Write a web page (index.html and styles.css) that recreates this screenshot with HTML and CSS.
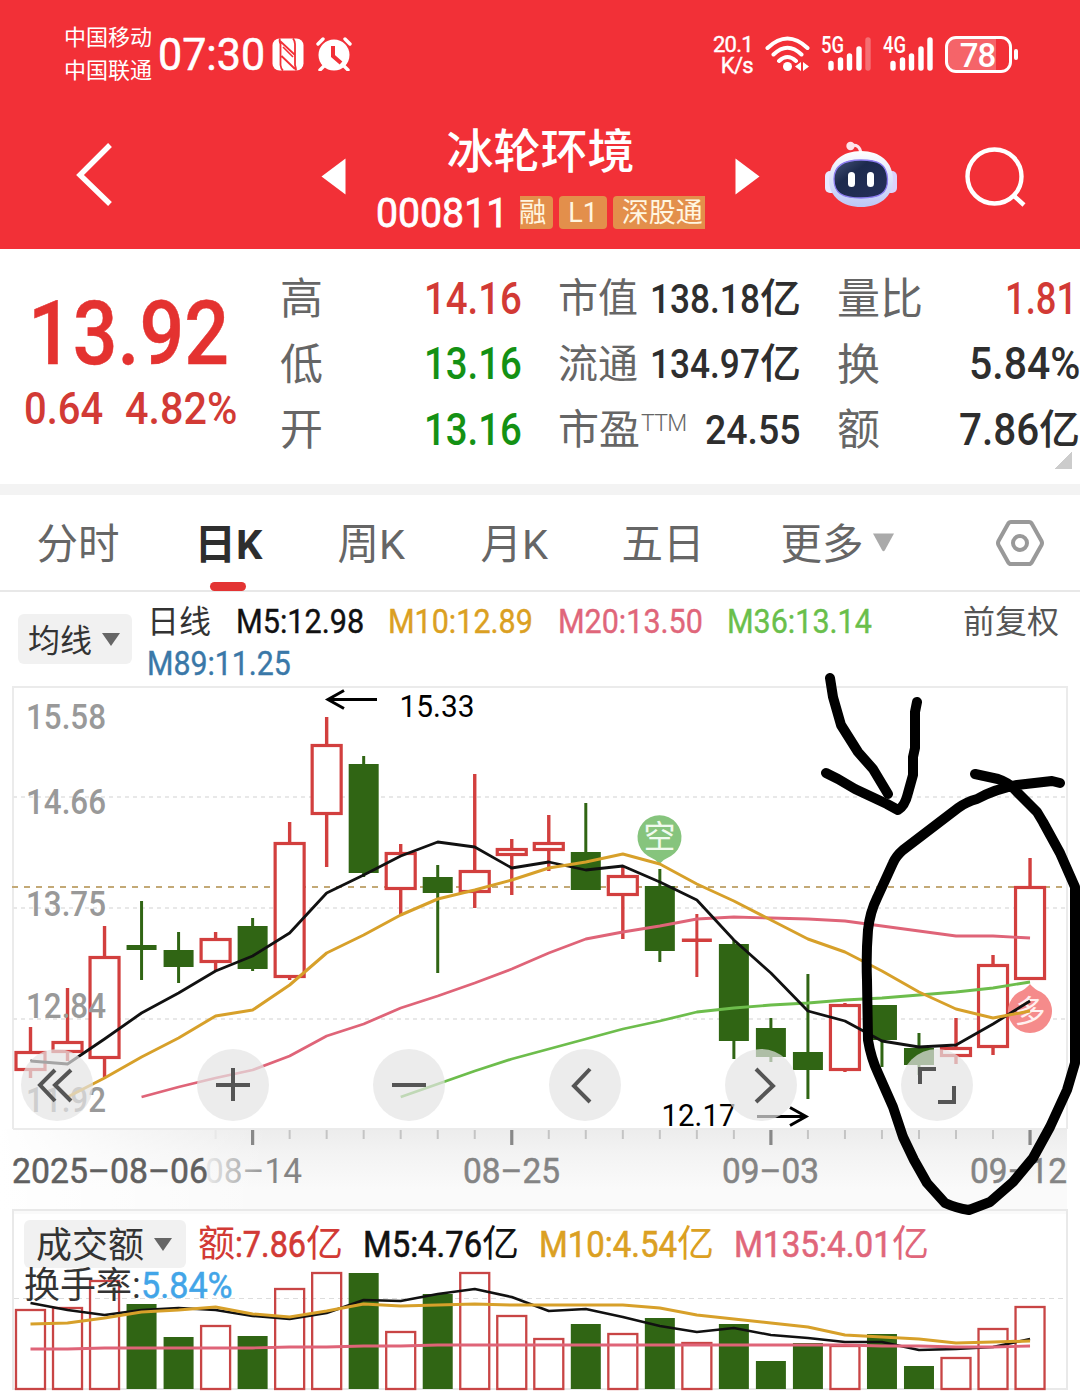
FILE: index.html
```html
<!DOCTYPE html>
<html lang="zh-CN">
<head>
<meta charset="utf-8">
<title>冰轮环境 000811</title>
<link rel="stylesheet" href="styles.css">
</head>
<body>
<div class="screen">
<header class="top">
  <div class="status">
    <div class="carriers"><span>中国移动</span><span>中国联通</span></div>
    <div class="clock" data-w="107">07:30</div>
    <svg class="nfc" width="32" height="33" viewBox="0 0 32 33"><rect x="0.5" y="0.5" width="31" height="32" rx="7" fill="#fff"/><path d="M8 0.500Q7 3 8.500 6V27Q9 31 11 32.500M21 0.500Q23 3 23 6V27Q24 30 24 32.500M8 3L23 17M9.500 18L23 31" fill="none" stroke="#f23037" stroke-width="1.800"/><path d="M11 9L21 19" fill="none" stroke="#f23037" stroke-width="1.600"/></svg>
    <svg class="alarm" width="36" height="34" viewBox="0 0 36 34"><circle cx="18" cy="18" r="15.5" fill="#fff"/><path d="M8 29L4 33M28 29L32 33M2 7L7 2M34 7L29 2" stroke="#fff" stroke-width="3.4" stroke-linecap="round"/><path d="M17 9V19L25 26" fill="none" stroke="#f23037" stroke-width="4"/></svg>
    <div class="speed"><span>20.1</span><span>K/s</span></div>
    <svg class="wifi" width="46" height="36" viewBox="0 0 46 36"><path d="M2.500 12Q22.500-7 42.500 12M8.500 18.500Q22.500 5 36.500 18.500M14 25Q22.500 17 31 25" fill="none" stroke="#fff" stroke-width="4" stroke-linecap="round"/><circle cx="22.500" cy="30.500" r="4.500" fill="#fff"/><path d="M36 26v9l-6-4.500zM38 26v9l6-4.500z" fill="#fff"/></svg>
    <div class="signal"><span>5G</span><svg width="44" height="36" viewBox="0 0 44 36" stroke="#fff" stroke-width="5.400" stroke-linecap="round"><path d="M3 27.500V32M12.500 24V32M21.500 20V32M31 13V32"/><path d="M40 4V32" opacity=".3"/></svg></div>
    <div class="signal second"><span>4G</span><svg width="44" height="36" viewBox="0 0 44 36" stroke="#fff" stroke-width="5.400" stroke-linecap="round"><path d="M3 27.500V32M12.500 24V32M21.500 20V32M31 13V32M40 4V32"/></svg></div>
    <div class="battery"><span>78</span></div>
  </div>
  <nav class="nav">
    <svg class="back" width="40" height="70" viewBox="0 0 40 70"><path d="M35 6L5 36L35 65" fill="none" stroke="#fff" stroke-width="5.400"/></svg>
    <svg class="prev" width="25" height="37" viewBox="0 0 25 37"><path d="M0.500 18.500L24.500 0.500V36.500z" fill="#fff"/></svg>
    <div class="stock">
      <h1>冰轮环境</h1>
      <div class="code"><b data-w="132">000811</b><i class="clip-l">融</i><i>L1</i><i class="clip-r">深股通</i></div>
    </div>
    <svg class="next" width="25" height="37" viewBox="0 0 25 37"><path d="M24.500 18.500L0.500 0.500V36.500z" fill="#fff"/></svg>
    <svg class="robot" width="74" height="68" viewBox="0 0 74 68">
      <defs><linearGradient id="shell" x2="0" y2="1"><stop offset="0" stop-color="#fff"/><stop offset="1" stop-color="#bcc7f6"/></linearGradient><linearGradient id="visor" x2="1" y2="1"><stop offset="0" stop-color="#465579"/><stop offset=".35" stop-color="#1d2a4d"/><stop offset="1" stop-color="#26305a"/></linearGradient></defs>
      <path d="M26 5Q36 2 37 13" fill="none" stroke="#fde5ef" stroke-width="3"/><circle cx="26.500" cy="5" r="4.200" fill="#ffe3ea"/>
      <rect x="1" y="30" width="12" height="22" rx="5" fill="#e9e9ff"/><rect x="61" y="30" width="12" height="22" rx="5" fill="#dcd2fb"/>
      <path d="M37 10C56 10 69 21 69 39C69 56 55 66 37 66C19 66 5 56 5 39C5 21 18 10 37 10z" fill="url(#shell)"/>
      <path d="M37 19C54 19 63 23 63.500 38C64 52 56 57 37 57C18 57 10 52 10 38C10 24 20 19 37 19z" fill="url(#visor)" stroke="#8c7cf0" stroke-width="1.300"/>
      <rect x="24" y="31" width="7" height="15" rx="3.500" fill="#fff"/><rect x="43" y="31" width="7" height="15" rx="3.500" fill="#fff"/>
    </svg>
    <svg class="search" width="64" height="64" viewBox="0 0 64 64" fill="none" stroke="#fff" stroke-width="4.400"><circle cx="30.500" cy="30.500" r="27"/><path d="M49 49L60 59"/></svg>
  </nav>
</header>

<section class="quote">
  <div class="last">
    <div class="price"><b data-w="201">13.92</b></div>
    <div class="change"><b data-w="79">0.64</b><b data-w="112">4.82%</b></div>
  </div>
  <div class="stats first">
    <div><span>高</span><b class="up" data-w="98">14.16</b></div>
    <div><span>低</span><b class="down" data-w="98">13.16</b></div>
    <div><span>开</span><b class="down" data-w="98">13.16</b></div>
  </div>
  <div class="stats mid">
    <div><span>市值</span><p><b data-w="110">138.18</b>亿</p></div>
    <div><span>流通</span><p><b data-w="110">134.97</b>亿</p></div>
    <div><span class="pe">市盈<sup>TTM</sup></span><b data-w="96">24.55</b></div>
  </div>
  <div class="stats wide">
    <div><span>量比</span><b class="up" data-w="72">1.81</b></div>
    <div><span>换</span><b data-w="111">5.84%</b></div>
    <div><span>额</span><p><b data-w="80">7.86</b>亿</p></div>
  </div>
  <i class="corner"></i>
</section>

<nav class="tabs">
  <span>分时</span><span class="on">日K</span><span>周K</span><span>月K</span><span>五日</span>
  <span class="more">更多<svg width="23" height="19" viewBox="0 0 23 19"><path d="M1 0.500H22L13 17Q11.500 19.500 10 17z" fill="#aaa"/></svg></span>
  <svg class="gear" width="50" height="48" viewBox="0 0 50 48" fill="none" stroke="#999" stroke-width="4"><path d="M16 3H34Q36 3 37 5L46.500 22Q47.500 24 46.500 26L37 43Q36 45 34 45H16Q14 45 13 43L3.500 26Q2.500 24 3.500 22L13 5Q14 3 16 3z"/><circle cx="25" cy="24" r="7"/></svg>
</nav>

<section class="legend">
  <div class="chip"><span>均线</span><svg width="18" height="13" viewBox="0 0 18 13"><path d="M0 0H18L9 13z" fill="#666"/></svg></div>
  <div class="ma">
    <span class="day">日线</span><b class="m5" data-w="128">M5:12.98</b><b class="m10" data-w="145">M10:12.89</b><b class="m20" data-w="145">M20:13.50</b><b class="m36" data-w="145">M36:13.14</b>
    <b class="m89" data-w="144">M89:11.25</b>
  </div>
  <span class="adjust">前复权</span>
</section>

<section class="chart">
  <svg id="kline" width="1080" height="523" viewBox="0 686 1080 523"></svg>
  <div class="tools">
    <button><svg viewBox="0 0 72 72"><path d="M34 21L19 36L34 52M50 21L34 36L50 52"/></svg></button>
    <button><svg viewBox="0 0 72 72"><path d="M36 19V52M19 36H53"/></svg></button>
    <button><svg viewBox="0 0 72 72"><path d="M19 36H53"/></svg></button>
    <button><svg viewBox="0 0 72 72"><path d="M41 20L25 37L41 53"/></svg></button>
    <button><svg viewBox="0 0 72 72"><path d="M31 20L48 37L31 53"/></svg></button>
    <button><svg viewBox="0 0 72 72"><path d="M19 35V20H35M53 37V53H37"/></svg></button>
  </div>
</section>

<section class="volume">
  <svg id="vol" width="1080" height="189" viewBox="0 1209 1080 189"></svg>
  <div class="vol-head">
    <div class="chip"><span>成交额</span><svg width="18" height="13" viewBox="0 0 18 13"><path d="M0 0H18L9 13z" fill="#666"/></svg></div>
    <p class="up">额<b data-w="71">:7.86</b>亿</p><p class="m5"><b data-w="119">M5:4.76</b>亿</p><p class="m10"><b data-w="138">M10:4.54</b>亿</p><p class="m20"><b data-w="158">M135:4.01</b>亿</p>
  </div>
  <div class="turnover">换手率:<b data-w="92">5.84%</b></div>
</section>

<svg class="ink" width="1080" height="1398" viewBox="0 0 1080 1398">
  <path d="M830 678L833 697L841 725L858 752L873 769L888 794"/>
  <path d="M826 773L838 779L855 789L887 804L898 810Q905 806 908 793L913 775L913 757L915 748V712L917 702"/>
  <path d="M1060 783L1052 781L1017 785Q995 789 977 799Q966 802 958 808L903 850Q896 856 893 863L877 898Q870 912 868 930Q866 955 867 980L868 1040Q871 1058 878 1073L893 1107L903 1137L914 1160L927 1183L945 1203Q956 1208 969 1210L990 1202L1013 1182L1033 1158L1050 1127L1067 1090L1075 1063V887L1060 853L1043 822L1037 812L1017 792Q1010 783 998 779L975 774"/>
</svg>
</div>
<script src="app.js"></script>
</body>
</html>
```
FILE: styles.css
```css
* { box-sizing: border-box; margin: 0; padding: 0; }
body { background: #fff; font-family: Roboto, "Noto Sans CJK SC", sans-serif; color: #333; }
svg { display: block; flex: none; }
i { font-style: normal; }
b { font-weight: 500; }
.screen { position: relative; width: 1080px; height: 1398px; overflow: hidden; }
[data-w] { display: inline-block; white-space: nowrap; }
[data-w] > span { display: inline-block; transform-origin: 0 50%; }

.top { height: 249px; background: #f23037; color: #fff; }
.status { height: 108px; display: flex; align-items: center; padding-left: 64px; }
.carriers { display: flex; flex-direction: column; font-size: 22px; line-height: 33px; width: 94px; margin-top: -1px; }
.clock { font-size: 45px; line-height: 50px; margin-top: 2px; -webkit-text-stroke: .6px currentColor; }
.nfc { margin-left: 7px; }
.alarm { margin-left: 12px; }
.speed { margin-left: 351px; width: 62px; padding: 2px 12px 0 0; display: flex; flex-direction: column; align-items: flex-end; font-size: 22px; line-height: 21px; letter-spacing: -.7px; -webkit-text-stroke: .4px currentColor; }
.signal { position: relative; width: 62px; height: 36px; padding-left: 7px; }
.wifi + .signal { margin-left: 10px; }
.signal span { position: absolute; left: 0; top: 0; font-size: 23px; line-height: 20px; font-weight: 500; transform: scaleX(.8); transform-origin: 0 0; }
.battery { position: relative; width: 67px; height: 37px; border: 3px solid #fff; border-radius: 11px; background: linear-gradient(90deg, rgba(255,255,255,.25) 78%, transparent 78%); text-align: center; font-size: 33px; font-weight: 500; line-height: 33px; letter-spacing: -1px; padding-right: 2px; }
.battery::after { content: ""; position: absolute; right: -9px; top: 10px; width: 4px; height: 11px; border-radius: 2px; background: #fff; }

.nav { display: flex; align-items: flex-start; height: 141px; padding-left: 75px; }
.back { margin-top: 31px; }
.prev { margin: 50px 0 0 206px; }
.stock { width: 389px; height: 141px; display: flex; flex-direction: column; align-items: center; }
.stock h1 { font-size: 47px; line-height: 54px; font-weight: 500; margin-top: 17px; }
.code { display: flex; align-items: center; height: 34px; margin-top: 16px; gap: 6px; font-size: 41px; line-height: 44px; }
.code b { font-weight: 400; margin-right: 6px; padding-top: 2px; -webkit-text-stroke: .8px currentColor; }
.code i { background: #e38f4b; color: #fff6e0; font-size: 27px; line-height: 35px; height: 33px; padding: 0 9px; border-radius: 4px; }
.code .clip-l { width: 33px; padding: 0 7px 0 0; direction: rtl; overflow: hidden; border-radius: 0 4px 4px 0; }
.code .clip-r { padding-right: 2px; border-radius: 4px 0 0 4px; }
.next { margin-top: 50px; }
.robot { margin: 33px 0 0 64px; }
.search { margin: 38px 0 0 66px; }

.quote { position: relative; height: 235px; display: grid; grid-template-columns: 280px 278px 279px 243px; padding-top: 17px; }
.last { padding-left: 24px; color: #e43230; }
.price { height: 112px; font-size: 89px; line-height: 136px; margin-left: 4px; -webkit-text-stroke: .5px currentColor; }
.change { display: flex; gap: 22px; font-size: 45px; line-height: 62px; color: #d23a35; }
.stats > div { height: 65.5px; display: flex; justify-content: space-between; align-items: center; width: 243px; font-size: 45px; line-height: 66px; }
.first > div { width: 242px; }
.stats > div > span { color: #666; font-size: 43px; padding-top: 1px; }
.stats b { color: #2e2e2e; }
.stats b span { font-size: inherit; }
.stats p { display: flex; font-size: 41px; color: #2e2e2e; font-weight: 500; }
.stats .up, .up, .up b { color: #d23a35; }
.stats .down { color: #149114; }
.stats.mid > div > span { font-size: 40px; }
.mid b { font-size: 41px; }
.wide p b { font-size: 45px; }
.wide .up { margin-right: 3px; }
.stats.mid > div > .pe { font-size: 41px; }
.pe sup { font-size: 23px; font-weight: 300; line-height: 20px; vertical-align: 13px; letter-spacing: -.7px; margin-left: 1px; }
.corner { position: absolute; right: 8px; bottom: 15px; width: 18px; height: 18px; background: linear-gradient(135deg, transparent 50%, #ccc 50%); }

.tabs { height: 108px; border-top: 11px solid #f3f3f3; border-bottom: 2px solid #e8e8e8; display: grid; grid-template-columns: 158px 143px 143px 141px 159px 214px 1fr; padding-left: 36.5px; align-items: center; font-size: 41.5px; color: #666; line-height: 99px; }
.tabs span { position: relative; height: 95px; white-space: nowrap; }
.tabs .on { font-weight: 700; color: #2e2e2e; }
.on::after { content: ""; position: absolute; left: 15px; bottom: -1px; width: 36px; height: 9px; border-radius: 5px; background: #e33433; }
.more { display: flex; align-items: flex-start; gap: 8px; }
.more svg { margin-top: 38px; }

.legend { height: 94px; display: flex; padding: 8px 18px 0; font-size: 32px; }
.chip { width: 114px; height: 50px; margin-top: 14px; padding-left: 10px; background: #f1f1f1; border-radius: 6px; display: flex; align-items: center; gap: 10px; font-size: 32px; line-height: 50px; color: #333; }
.chip span { padding-top: 3px; }
.ma { flex: none; margin-left: 15px; width: 816px; line-height: 42px; display: flex; flex-wrap: wrap; column-gap: 24.5px; align-content: flex-start; }
.day { padding-top: 1px; height: 42px; }
.ma b { font-size: 33px; height: 42px; padding-top: 1px; font-weight: 400; -webkit-text-stroke: .4px currentColor; }
.adjust { line-height: 44px; color: #555; white-space: nowrap; }
.m5, .m5 b { color: #111; }
.m10, .m10 b { color: #dba022; }
.m20, .m20 b { color: #e0667a; }
.m36 { color: #6abf4b; }
.m89 { color: #3a78a8; }

.chart { position: relative; height: 523px; }
.tools { position: absolute; left: 21px; top: 363px; display: flex; gap: 104px; }
.tools button { width: 72px; height: 72px; border: 0; border-radius: 50%; background: rgba(228,228,228,.7); }
.tools path { fill: none; stroke: #555; stroke-width: 4; }

.volume { position: relative; height: 189px; }
.volume > svg { position: absolute; left: 0; top: 0; }
.vol-head { position: relative; display: flex; height: 59px; padding: 11px 0 0 24px; font-size: 37px; line-height: 50px; }
.vol-head .chip { width: 162px; height: 48px; margin: 0 12px 0 0; padding-left: 12px; font-size: 36px; line-height: 48px; }
.vol-head p { display: flex; margin-right: 20px; }
.vol-head b { font-weight: 400; -webkit-text-stroke: .6px currentColor; }
.turnover { position: relative; display: flex; padding-left: 24px; margin-top: -7px; font-size: 36px; line-height: 50px; }
.turnover b { color: #42a5e8; font-weight: 400; -webkit-text-stroke: .5px currentColor; }
.ink { position: absolute; left: 0; top: 0; pointer-events: none; }
.ink path { fill: none; stroke: #000; stroke-width: 10; stroke-linecap: round; stroke-linejoin: round; }
```
FILE: app.js
```javascript
document.querySelectorAll('[data-w]').forEach(el => {
  const inner = document.createElement('span');
  inner.textContent = el.textContent;
  el.textContent = '';
  el.appendChild(inner);
  const w = +el.dataset.w;
  inner.style.transform = `scaleX(${w / inner.offsetWidth})`;
  el.style.width = w + 'px';
});

const X = i => 30.5 + 37.02 * i;
const RED = '#d23f3e', GREEN = '#306514';

// [up?, high, body top, body bottom, low, volume top]
const days = [
  [1,1027,1051,1071,1078,1309],[1,988,1041,1053,1061,1307],[1,926,956,1059,1077,1280],
  [0,901,945,950,980,1304],[0,932,950,967,983,1337],[1,932,938,963,971,1325],
  [0,918,926,969,971,1336],[1,822,842,978,980,1288],[1,717,744,815,867,1272],
  [0,756,764,873,877,1273],[1,844,852,890,916,1331],[0,865,877,893,973,1294],
  [1,774,870,893,908,1272],[1,839,848,856,895,1315],[1,815,842,851,871,1338],
  [0,803,852,890,890,1324],[1,867,875,896,939,1333],[0,869,886,951,962,1318],
  [1,914,938.5,942,977,1342],[0,940,944,1041,1059,1324],[0,1018,1028,1057,1062,1361],
  [0,974,1052,1070,1099,1343],[1,1003,1004,1071,1072,1345],[0,1005,1005,1040,1067,1334],
  [0,1033,1048,1065,1075,1366],[1,1018,1047,1057,1064,1357],[1,955,964,1048,1055,1328],
  [1,858,886,980,980,1306]
];
const line = (start, ys, color, w = 2.8) =>
  `<polyline fill="none" stroke="${color}" stroke-width="${w}" stroke-linejoin="round" points="${ys.map((y, k) => X(start + k) + ',' + y).join(' ')}"/>`;
const text = (x, y, w, size, color, s, extra = '') =>
  `<text x="${x}" y="${y}" font-size="${size}" fill="${color}" textLength="${w}" lengthAdjust="spacingAndGlyphs" ${extra}>${s}</text>`;

let k = `<defs>
<linearGradient id="band" x2="0" y2="1"><stop offset="0" stop-color="#ececec"/><stop offset=".3" stop-color="#f3f3f3"/><stop offset=".75" stop-color="#fafafa"/></linearGradient>
<linearGradient id="fade"><stop offset="0" stop-color="#fff"/><stop offset="1" stop-color="#fff" stop-opacity="0"/></linearGradient>
<linearGradient id="date" gradientUnits="userSpaceOnUse" x1="200" x2="275"><stop offset="0" stop-color="#f4f4f4"/><stop offset="1" stop-color="#848484"/></linearGradient></defs>
<rect x="0" y="1129" width="1067" height="80" fill="url(#band)"/><rect x="0" y="1129" width="270" height="80" fill="url(#fade)"/>
<path d="M13 1129V687H1067V1129M13 1129H1067" fill="none" stroke="#ebebeb" stroke-width="2"/>
<path d="M13 797H1067M13 908H1067M13 1019H1067" stroke="#e8e8e8" stroke-width="2" stroke-dasharray="4 4"/>
<path d="M12 887H1067" stroke="#c3a976" stroke-width="2" stroke-dasharray="6 6"/>`;
days.forEach(([up, h, t, b, l], i) => {
  const x = X(i), c = up ? RED : GREEN;
  const flat = b - t < 4;
  if (up && !flat) {
    k += `<path d="M${x} ${h}V${t}M${x} ${b}V${l}" stroke="${c}" stroke-width="3.4"/>`;
    k += `<rect x="${x - 14.5}" y="${t + 1.5}" width="29" height="${b - t - 3}" fill="#fff" stroke="${c}" stroke-width="3.2"/>`;
  } else {
    k += `<path d="M${x} ${h}V${l}" stroke="${c}" stroke-width="3"/><rect x="${x - 15}" y="${t}" width="30" height="${b - t}" fill="${c}"/>`;
  }
});
[['15.58',729],['14.66',814],['13.75',916],['12.84',1018],['11.92',1112]].forEach(([v, y]) => k += text(26, y, 80, 35, '#999', v, 'font-weight="500"'));
k += `<path d="M659.5 864Q655 859 648 856A22 22 0 1 1 671 856Q664 859 659.500 864z" fill="#86c47d"/><text x="659.500" y="848" text-anchor="middle" font-size="32" fill="#f0faee" font-weight="400">空</text>`;
k += `<path d="M1030 984Q1034 989 1041 992A22 22 0 1 1 1019 992Q1026 989 1030 984z" fill="#f58b8b"/><text x="1030" y="1022" text-anchor="middle" font-size="31" fill="#fff0f0" font-weight="400">多</text>`;
k += line(3, [1097,1087,1078,1070,1056,1036,1024,1008,996,983,969,953,939,932,926,919,917,918,919,921,926,931,936,936,938], '#df6478');
k += line(10, [1097,1084,1071,1059,1049,1039,1029,1021,1012,1008,1005,1003,1000,998,995,992,988,982], '#6dbd4c');
k += line(0, [1061,1064,1039,1013,993,971,956,933,893,875,856,842,847,868,862,870,866,882,900,940,973,1011,1021,1041,1047,1045,1024,1001], '#111');
k += line(1, [1097,1078,1057,1038,1016,1010,985,953,935,915,899,890,880,868,862,854,864,884,901,920,939,952,971,992,1009,1018,1011], '#d7a02a', 3);
k += `<path d="M377 699.500H328M344 690.500L328 699.500L344 708.500M757 1116.500H806M790 1107.500L806 1116.500L790 1125.500" fill="none" stroke="#000" stroke-width="3"/>`;
k += text(399.5, 717, 75, 30.5, '#000', '15.33') + text(661.5, 1126, 74, 30.5, '#000', '12.17');
for (let i = 5; i < 28; i++) {
  const major = [6, 13, 20, 27].includes(i);
  k += `<path d="M${X(i)} 1130V${major ? 1145 : 1139}" stroke="${major ? '#888' : i === 5 ? '#e8e8e8' : '#c4c4c4'}" stroke-width="${major ? 3.2 : 2}"/>`;
}
const bold = 'stroke-width=".5" paint-order="stroke"';
k += text(205, 1183, 97, 35, 'url(#date)', '08–14', bold) + text(463, 1183, 97, 35, '#848484', '08–25', bold + ' stroke="#848484"') + text(722, 1183, 97, 35, '#848484', '09–03', bold + ' stroke="#848484"') + text(970, 1183, 97, 35, '#848484', '09–12', bold + ' stroke="#848484"') + text(12, 1183, 196, 35, '#606060', '2025–08–06', bold + ' stroke="#606060"');
document.getElementById('kline').innerHTML = k;

let v = `<path d="M13 1389V1210H1067V1389z" fill="none" stroke="#e9e9e9" stroke-width="2"/><path d="M14 1212.500H1066" stroke="#fafafa" stroke-width="3"/><path d="M14 1298.500H1066" stroke="#ddd" stroke-dasharray="5 4"/>`;
days.forEach(([up, , , , , t], i) => {
  const x = X(i);
  v += up
    ? `<rect x="${x - 14.5}" y="${t + 1}" width="29" height="${1388 - t}" fill="none" stroke="#c84545" stroke-width="2.300"/>`
    : `<rect x="${x - 15}" y="${t}" width="30" height="${1389 - t}" fill="${GREEN}"/>`;
});
v += line(0, [1303,1310,1315,1310,1308,1310,1316,1319,1313,1300,1301,1294,1289,1297,1311,1309,1317,1326,1332,1328,1335,1338,1342,1342,1350,1349,1347,1339], '#111', 2.5);
v += line(0, [1324,1323,1318,1312,1310,1307,1314,1317,1311,1304,1306,1305,1304,1305,1305,1305,1305,1308,1315,1319,1323,1327,1335,1337,1339,1343,1342,1341], '#d7a02a', 3);
v += line(0, [1349,1349,1348,1348,1348,1348,1348,1347,1347,1346,1346,1345,1345,1345,1345,1345,1345,1345,1345,1345,1345,1345,1345,1346,1346,1347,1347,1346], '#df6478');
document.getElementById('vol').innerHTML = v;
```
